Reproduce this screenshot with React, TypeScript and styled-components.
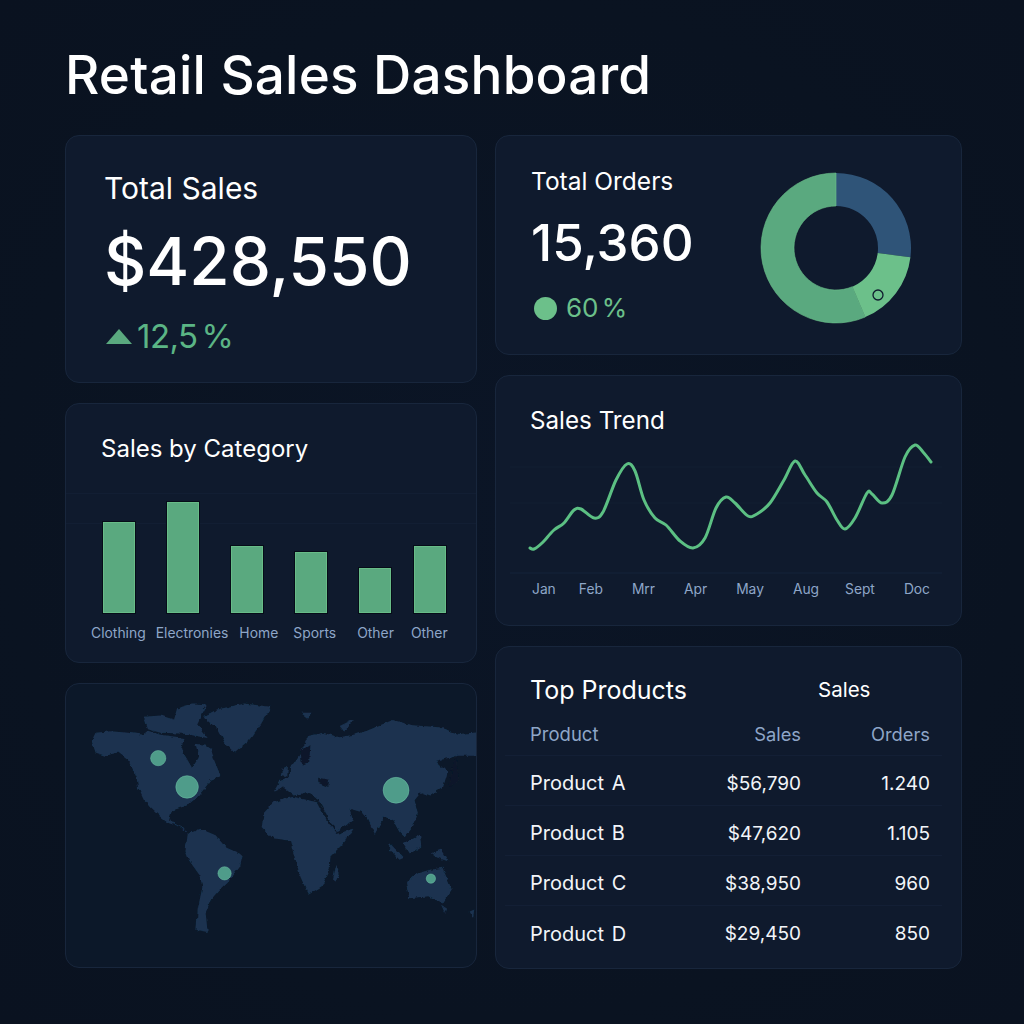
import type { FC } from "react";
import styled, { createGlobalStyle } from "styled-components";

const GlobalStyle = createGlobalStyle`
  html, body {
    margin: 0;
    padding: 0;
    background: #0a1321;
  }
  * {
    box-sizing: border-box;
  }
`;

const Page = styled.main`
  width: 1024px;
  height: 1024px;
  padding: 45px 62px 0 65px;
  font-family: Inter, "Noto Sans", sans-serif;
  color: #ffffff;
  background: radial-gradient(circle at 50% 50%, #0b1526 0%, #0a1321 70%, #0a1220 100%);
  overflow: hidden;
`;

const Title = styled.h1`
  margin: 0 0 30px;
  font-size: 53px;
  line-height: 60px;
  font-weight: 500;
  letter-spacing: 0.2px;
`;

const Columns = styled.div`
  display: grid;
  grid-template-columns: 412px 467px;
  column-gap: 18px;
`;

const Column = styled.div`
  display: flex;
  flex-direction: column;
  gap: 20px;
`;

const Card = styled.section<{ $h: number; $dark?: boolean }>`
  height: ${(p) => p.$h}px;
  background: ${(p) => (p.$dark ? "#0c1829" : "#0f1a2d")};
  border: 1px solid #18263c;
  border-radius: 14px;
  overflow: hidden;
`;

const SalesCard = styled(Card)`
  padding: 35px 0 0 38px;
`;

const CardTitle = styled.h2`
  margin: 0;
  font-size: 30px;
  line-height: 34px;
  font-weight: 400;
`;

const BigValue = styled.div`
  margin-top: 19px;
  font-size: 65.5px;
  line-height: 76px;
  font-weight: 500;
`;

const Delta = styled.div`
  margin-top: 16px;
  display: flex;
  align-items: center;
  gap: 5px;
  font-size: 33px;
  line-height: 40px;
  color: #5bb585;
  letter-spacing: -0.5px;
  word-spacing: -5px;
`;

const Triangle = styled.span`
  width: 0;
  height: 0;
  margin-left: 2px;
  border-left: 13px solid transparent;
  border-right: 13px solid transparent;
  border-bottom: 15px solid #5aa97f;
`;

const OrdersCard = styled(Card)`
  display: flex;
  justify-content: space-between;
  padding: 29px 49px 0 35px;
`;

const OrdersTitle = styled.h2`
  margin: 0;
  font-size: 24.5px;
  line-height: 32px;
  font-weight: 400;
`;

const OrdersValue = styled.div`
  margin-top: 16px;
  font-size: 51px;
  line-height: 60px;
  font-weight: 500;
`;

const OrdersShare = styled.div`
  margin-top: 18px;
  display: flex;
  align-items: center;
  gap: 9px;
  font-size: 26px;
  line-height: 34px;
  color: #6cc08a;
  word-spacing: -4px;
`;

const Dot = styled.span`
  width: 23px;
  height: 23px;
  margin-left: 3px;
  border-radius: 50%;
  background: #6cc08a;
`;

const Donut = styled.svg`
  width: 152px;
  height: 152px;
  margin-top: 7px;
`;

const CategoryCard = styled(Card)`
  padding: 28px 0 0 35px;
`;

const CategoryTitle = styled.h2`
  margin: 0;
  font-size: 24px;
  line-height: 34px;
  font-weight: 400;
`;

const BarRow = styled.div`
  display: flex;
  align-items: flex-end;
  height: 124px;
  margin: 23px 0 0 -35px;
  padding-left: 37px;
  background:
    linear-gradient(#121e33, #121e33) 0 4px / 100% 1px no-repeat,
    linear-gradient(#121e33, #121e33) 0 34px / 100% 1px no-repeat;
`;

const Bar = styled.div<{ $h: number; $gap: number }>`
  width: 32px;
  height: ${(p) => p.$h}px;
  margin-left: ${(p) => p.$gap}px;
  background: #5aa97f;
  border: 1px solid #68bc88;
  box-shadow: 0 0 0 1px #060c18;
`;

const LabelRow = styled.div`
  display: flex;
  margin: 10px 0 0 -10px;
`;

const BarLabel = styled.span<{ $gap: number }>`
  margin-left: ${(p) => p.$gap}px;
  font-size: 13.9px;
  line-height: 20px;
  color: #8ea6c8;
`;

const TrendCard = styled(Card)`
  padding: 28px 31px 0 34px;
`;

const TrendTitle = styled.h2`
  margin: 0;
  font-size: 24.2px;
  line-height: 34px;
  font-weight: 400;
`;

const TrendChart = styled.svg`
  display: block;
  width: 401px;
  height: 119px;
  margin-top: 12px;
  overflow: visible;
`;

const Months = styled.div`
  display: flex;
  margin-left: 2px;
  padding-top: 10px;
`;

const Month = styled.span<{ $gap: number }>`
  margin-left: ${(p) => p.$gap}px;
  font-size: 13.8px;
  line-height: 20px;
  color: #8ea6c8;
`;

const MapCard = styled(Card)`
  padding: 0;
`;

const WorldMap = styled.svg`
  display: block;
  width: 100%;
  height: 100%;
`;

const ProductsCard = styled(Card)`
  padding: 26px 31px 0 34px;
`;

const ProductsHead = styled.div`
  display: grid;
  grid-template-columns: 1fr 112px;
  align-items: center;
  margin-bottom: 5px;
`;

const ProductsTitle = styled.h2`
  margin: 0;
  font-size: 25px;
  line-height: 34px;
  font-weight: 400;
`;

const ProductsSub = styled.span`
  font-size: 20.5px;
  line-height: 34px;
`;

const Row = styled.div<{ $head?: boolean }>`
  display: grid;
  grid-template-columns: 1fr 120px 129px;
  align-items: center;
  height: ${(p) => (p.$head ? "44px" : "50px")};
  margin: 0 -12px 0 -25px;
  padding: ${(p) => (p.$head ? "0" : "5px")} 12px 0 25px;
  border-bottom: 1px solid #131f35;
  font-size: ${(p) => (p.$head ? "18.5px" : "20px")};
  color: ${(p) => (p.$head ? "#8ea6c8" : "#f2f5f9")};

  &:last-child {
    border-bottom: 0;
  }
`;

const NameCell = styled.span`
  word-spacing: 2px;
`;

const NumCell = styled.span<{ $head?: boolean }>`
  text-align: right;
  font-size: ${(p) => (p.$head ? "18.3px" : "19px")};
`;

const bars = [
  { h: 91, gap: 0 },
  { h: 111, gap: 32 },
  { h: 67, gap: 32 },
  { h: 61, gap: 32 },
  { h: 45, gap: 32 },
  { h: 67, gap: 23 },
];

const labels = [
  { text: "Clothing", gap: 0 },
  { text: "Electronies", gap: 10 },
  { text: "Home", gap: 11 },
  { text: "Sports", gap: 15 },
  { text: "Other", gap: 21 },
  { text: "Other", gap: 17 },
];

const months = [
  { text: "Jan", gap: 0 },
  { text: "Feb", gap: 23 },
  { text: "Mrr", gap: 29 },
  { text: "Apr", gap: 29 },
  { text: "May", gap: 29 },
  { text: "Aug", gap: 29 },
  { text: "Sept", gap: 26 },
  { text: "Doc", gap: 29 },
];

const products = [
  { name: "Product A", sales: "$56,790", orders: "1.240" },
  { name: "Product B", sales: "$47,620", orders: "1.105" },
  { name: "Product C", sales: "$38,950", orders: "960" },
  { name: "Product D", sales: "$29,450", orders: "850" },
];

// traced from the chart, in px relative to the svg's top left corner
const trend: [number, number][] = [
  [0, 98], [4, 99], [12, 93], [24, 80], [34, 73], [44, 60], [51, 59], [64, 68],
  [73, 62], [86, 30], [97, 14], [105, 21], [114, 50], [125, 68], [136, 75],
  [150, 91], [163, 98], [175, 88], [186, 58], [196, 47], [205, 53], [218, 66],
  [227, 64], [240, 53], [254, 30], [265, 11], [275, 25], [287, 43], [297, 52],
  [307, 70], [315, 79], [325, 68], [337, 43], [342, 44], [352, 53], [362, 45],
  [375, 7], [385, -5], [393, 2], [401, 12],
];

const smoothPath = (pts: [number, number][]) => {
  let d = `M${pts[0][0]} ${pts[0][1]}`;
  for (let i = 0; i < pts.length - 1; i++) {
    const p0 = pts[i - 1] || pts[i];
    const p1 = pts[i];
    const p2 = pts[i + 1];
    const p3 = pts[i + 2] || p2;
    const c1x = p1[0] + (p2[0] - p0[0]) / 6;
    const c1y = p1[1] + (p2[1] - p0[1]) / 6;
    const c2x = p2[0] - (p3[0] - p1[0]) / 6;
    const c2y = p2[1] - (p3[1] - p1[1]) / 6;
    d += ` C${c1x.toFixed(1)} ${c1y.toFixed(1)} ${c2x.toFixed(1)} ${c2y.toFixed(1)} ${p2[0]} ${p2[1]}`;
  }
  return d;
};

const polar = (r: number, deg: number) => {
  const a = (deg * Math.PI) / 180;
  return `${(76 + r * Math.sin(a)).toFixed(2)} ${(76 - r * Math.cos(a)).toFixed(2)}`;
};

const ring = (from: number, to: number) => {
  const large = to - from > 180 ? 1 : 0;
  return `M${polar(75, from)} A75 75 0 ${large} 1 ${polar(75, to)} L${polar(42, to)} A42 42 0 ${large} 0 ${polar(42, from)} Z`;
};

const land = [
  // north america
  "M92 182 L104 156 L150 152 L205 156 L246 162 L262 150 L300 162 L345 168 L372 172 L362 205 L395 262 L415 232 L405 190 L432 192 L452 205 L462 240 L482 288 L452 298 L438 318 L412 350 L385 372 L358 384 L334 392 L326 420 L345 432 L368 444 L382 462 L360 442 L322 428 L296 408 L270 384 L250 360 L232 322 L228 292 L205 242 L172 216 L132 226 L104 216 L98 198 Z",
  // arctic islands
  "M250 108 L300 104 L340 116 L350 82 L398 68 L440 70 L425 98 L410 130 L442 172 L402 165 L380 160 L340 158 L300 156 L262 146 Z",
  // greenland
  "M432 106 L470 86 L552 68 L632 78 L604 128 L566 180 L522 216 L497 190 L470 140 L442 124 Z",
  // south america
  "M382 462 L420 446 L466 466 L496 502 L548 526 L540 560 L510 600 L482 626 L452 660 L436 700 L442 758 L408 752 L412 690 L426 622 L420 590 L386 542 L375 512 Z",
  // eurasia
  "M640 336 L660 302 L690 290 L690 264 L722 218 L745 166 L790 156 L840 170 L882 162 L922 150 L1000 118 L1060 134 L1140 140 L1200 160 L1262 154 L1262 226 L1200 226 L1150 236 L1130 242 L1165 276 L1152 320 L1110 346 L1085 336 L1066 360 L1076 400 L1060 442 L1036 472 L1020 456 L1000 420 L975 410 L946 462 L926 420 L905 396 L870 386 L880 420 L860 436 L830 456 L800 402 L775 358 L742 336 L702 346 L670 322 Z",
  // africa
  "M605 442 L610 400 L640 366 L700 350 L772 366 L802 422 L830 462 L882 446 L852 490 L812 530 L810 570 L786 620 L746 646 L722 592 L710 552 L690 482 L640 476 Z",
  // madagascar
  "M830 556 L840 580 L828 606 L820 600 Z",
  // australia
  "M1040 610 L1070 582 L1112 570 L1150 564 L1178 630 L1150 672 L1110 650 L1050 656 Z",
  // uk, new guinea and island bits
  "M668 264 L684 258 L682 290 L662 288 Z",
  "M722 96 L758 96 L745 114 Z",
  "M1115 520 L1145 510 L1168 545 L1130 532 Z",
  "M1032 490 L1082 464 L1086 500 L1052 522 Z",
  "M992 490 L1032 535 L1020 540 L988 505 Z",
  "M1146 676 L1164 688 L1158 704 Z",
  "M1232 696 L1246 690 L1242 716 Z",
  "M840 136 L880 116 L856 156 Z",
];

const seas = [
  // hudson bay is in the outline, these are the inland waters
  "M775 292 L808 298 L806 320 L776 308 Z",
  "M722 212 L752 190 L748 244 L726 254 Z",
  "M1190 226 L1200 300 L1170 320 L1180 262 Z",
];

const hubs = [
  { x: 293, y: 233, r: 23 },
  { x: 380, y: 320, r: 34 },
  { x: 1010, y: 330, r: 39 },
  { x: 493, y: 581, r: 20 },
  { x: 1115, y: 597, r: 14 },
];

const App: FC = () => {
  return (
    <Page>
      <GlobalStyle />
      <Title>Retail Sales Dashboard</Title>

      <Columns>
        <Column>
          <SalesCard $h={248}>
            <CardTitle>Total Sales</CardTitle>
            <BigValue>$428,550</BigValue>
            <Delta>
              <Triangle />
              12,5 %
            </Delta>
          </SalesCard>

          <CategoryCard $h={260}>
            <CategoryTitle>Sales by Category</CategoryTitle>
            <BarRow>
              {bars.map((b, i) => (
                <Bar key={i} $h={b.h} $gap={b.gap} />
              ))}
            </BarRow>
            <LabelRow>
              {labels.map((l, i) => (
                <BarLabel key={i} $gap={l.gap}>
                  {l.text}
                </BarLabel>
              ))}
            </LabelRow>
          </CategoryCard>

          <MapCard $h={285} $dark>
            <WorldMap viewBox="15 9 1236 855" preserveAspectRatio="none">
              <defs>
                <filter id="coast" x="-5%" y="-5%" width="110%" height="110%">
                  <feTurbulence type="fractalNoise" baseFrequency="0.06" numOctaves="3" seed="4" />
                  <feDisplacementMap in="SourceGraphic" scale="12" xChannelSelector="R" yChannelSelector="G" />
                </filter>
              </defs>
              <g filter="url(#coast)">
                {land.map((d, i) => (
                  <path key={i} d={d} fill="#1a3350" />
                ))}
                {seas.map((d, i) => (
                  <path key={i} d={d} fill="#0c1829" />
                ))}
              </g>
              {hubs.map((h, i) => (
                <circle key={i} cx={h.x} cy={h.y} r={h.r} fill="#4f9c8a" stroke="#6fc4a8" strokeWidth="1.5" />
              ))}
            </WorldMap>
          </MapCard>
        </Column>

        <Column>
          <OrdersCard $h={220}>
            <div>
              <OrdersTitle>Total Orders</OrdersTitle>
              <OrdersValue>15,360</OrdersValue>
              <OrdersShare>
                <Dot />
                60 %
              </OrdersShare>
            </div>
            <Donut viewBox="0 0 152 152">
              <path d={ring(0, 97)} fill="#2f5478" />
              <path d={ring(97, 157)} fill="#6cc08a" />
              <path d={ring(157, 360)} fill="#5aa97f" stroke="#6cc08a" strokeWidth="0.6" />
              <circle cx="118" cy="123" r="5" fill="none" stroke="#0f1a2e" strokeWidth="1.3" />
            </Donut>
          </OrdersCard>

          <TrendCard $h={251}>
            <TrendTitle>Sales Trend</TrendTitle>
            <TrendChart viewBox="0 0 401 119">
              <line x1="-20" x2="412" y1="17" y2="17" stroke="#121e33" />
              <line x1="-20" x2="412" y1="53" y2="53" stroke="#121e33" />
              <line x1="-20" x2="412" y1="123" y2="123" stroke="#15233a" />
              <path d={smoothPath(trend)} fill="none" stroke="#5cc083" strokeWidth="3" strokeLinecap="round" />
            </TrendChart>
            <Months>
              {months.map((m) => (
                <Month key={m.text} $gap={m.gap}>
                  {m.text}
                </Month>
              ))}
            </Months>
          </TrendCard>

          <ProductsCard $h={323}>
            <ProductsHead>
              <ProductsTitle>Top Products</ProductsTitle>
              <ProductsSub>Sales</ProductsSub>
            </ProductsHead>
            <Row $head>
              <span>Product</span>
              <NumCell $head>Sales</NumCell>
              <NumCell $head>Orders</NumCell>
            </Row>
            {products.map((p) => (
              <Row key={p.name}>
                <NameCell>{p.name}</NameCell>
                <NumCell>{p.sales}</NumCell>
                <NumCell>{p.orders}</NumCell>
              </Row>
            ))}
          </ProductsCard>
        </Column>
      </Columns>
    </Page>
  );
};

export default App;
